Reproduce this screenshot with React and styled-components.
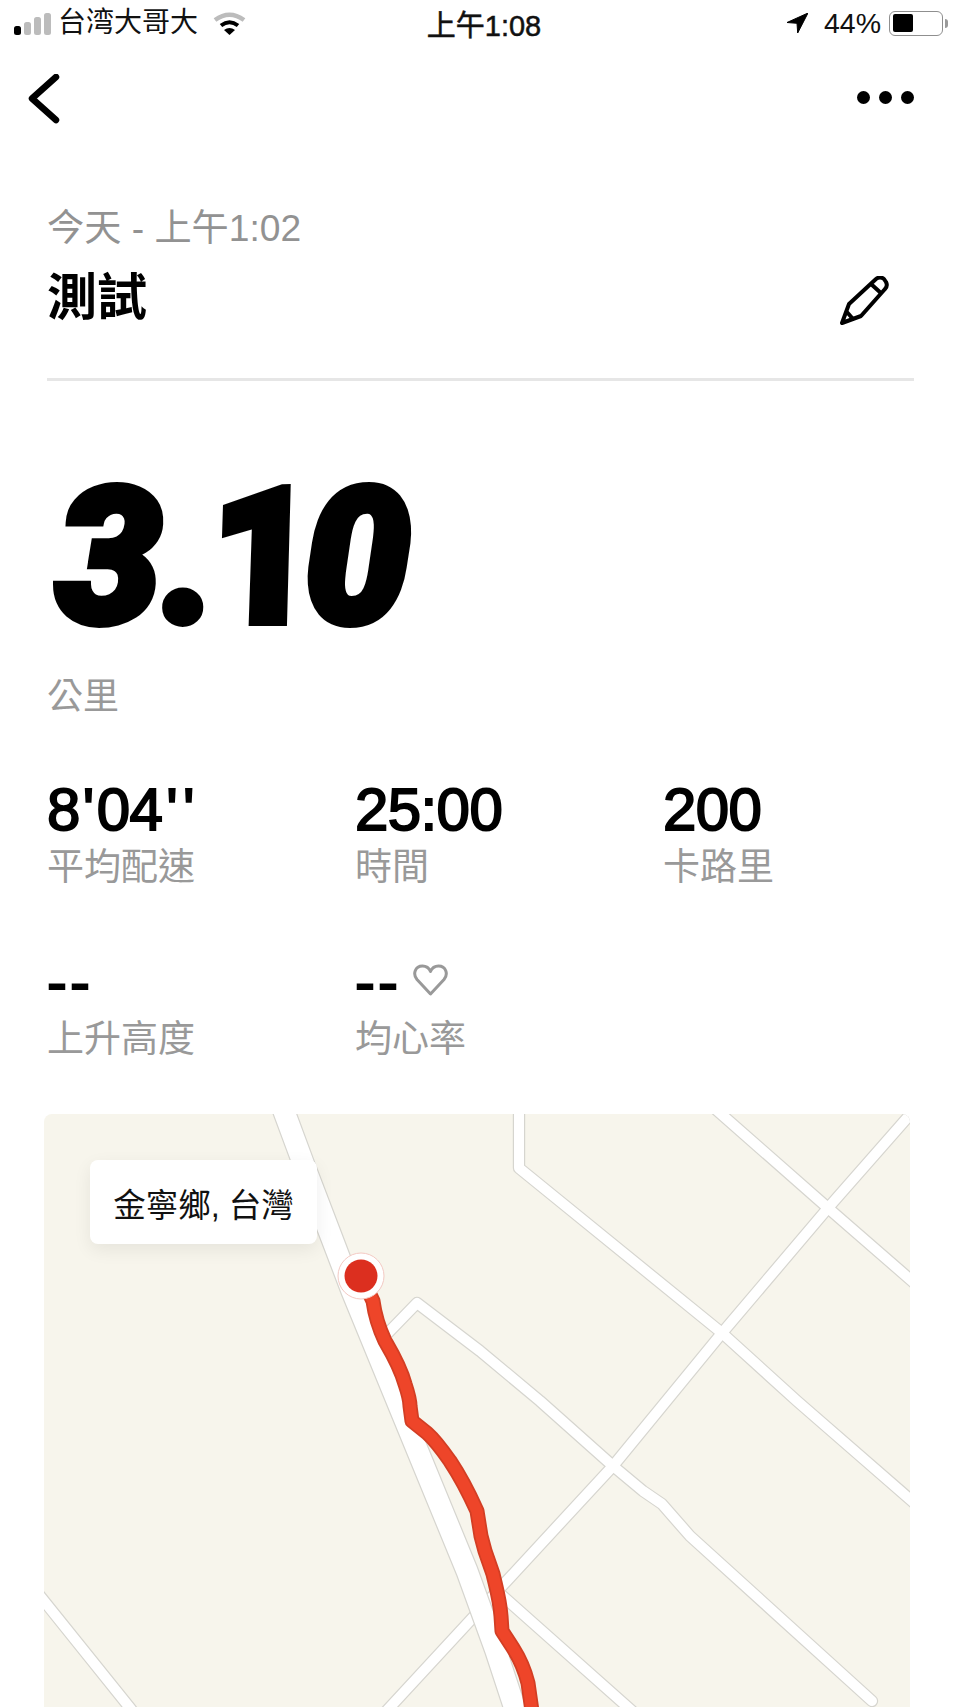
import React from "react";
import styled, { createGlobalStyle } from "styled-components";

const CJK = `"Liberation Sans", "Noto Sans CJK TC", sans-serif`;

const Global = createGlobalStyle`
  html, body { margin: 0; padding: 0; background: #fff; }
  * { box-sizing: border-box; }
`;

const Page = styled.div`
  width: 960px;
  height: 1707px;
  overflow: hidden;
  background: #fff;
  font-family: ${CJK};
  display: flex;
  flex-direction: column;
`;

const StatusBar = styled.div`
  height: 47px;
  display: grid;
  grid-template-columns: 1fr auto 1fr;
  align-items: center;
  padding: 0 12px 0 14px;
  font-size: 28px;
  color: #111;
`;
const StatusLeft = styled.div`
  display: flex;
  align-items: center;
`;
const Carrier = styled.span`
  margin-left: 7px;
  margin-right: 15px;
  line-height: 1;
`;
const Clock = styled.span`
  font-size: 29px;
  margin-left: 6px;
  -webkit-text-stroke: 0.5px #111;
`;
const StatusRight = styled.div`
  display: flex;
  align-items: center;
  justify-content: flex-end;
`;
const Percent = styled.span`
  margin: 0 8px 0 16px;
  font-size: 28.5px;
`;
const SignalBars = styled.div`
  display: flex;
  align-items: flex-end;
  gap: 3px;
  height: 22px;
  margin-top: 2px;
`;
const SignalBar = styled.i`
  display: block;
  width: 7px;
  height: ${(p) => p.$h}px;
  border-radius: 2.5px;
  background: ${(p) => (p.$on ? "#000" : "#bcbcbc")};
`;
const Battery = styled.div`
  width: 54px;
  height: 25px;
  border: 1.5px solid #8f8f8f;
  border-radius: 6px;
  padding: 2.5px;
  position: relative;
  margin-right: 5px;
  &::after {
    content: "";
    position: absolute;
    right: -5.5px;
    top: 7px;
    width: 3px;
    height: 9px;
    border-radius: 0 3px 3px 0;
    background: #9a9a9a;
  }
`;
const BatteryFill = styled.div`
  width: 20px;
  height: 100%;
  background: #000;
  border-radius: 2px;
`;

const NavBar = styled.div`
  height: 101px;
  display: flex;
  align-items: center;
  justify-content: space-between;
  padding: 0 46px 0 28px;
`;
const BackIcon = styled.svg`
  margin-top: 3px;
`;
const Dots = styled.div`
  display: flex;
  gap: 9px;
`;
const Dot = styled.i`
  display: block;
  width: 13px;
  height: 13px;
  border-radius: 50%;
  background: #000;
`;

const Header = styled.div`
  margin: 0 46px 0 47px;
  padding: 58px 0 0;
  height: 234px;
  border-bottom: 3px solid #e6e6e6;
`;
const DateText = styled.div`
  font-size: 37.2px;
  line-height: 44px;
  color: #929292;
`;
const TitleRow = styled.div`
  display: flex;
  justify-content: space-between;
  align-items: center;
  margin-top: 17px;
  padding-right: 25px;
`;
const Title = styled.div`
  font-size: 50px;
  line-height: 62px;
  font-weight: 700;
  color: #000;
`;
const PencilIcon = styled.svg`
  margin-top: 6px;
`;

const Distance = styled.div`
  display: flex;
  margin: 89px 0 0 56px;
  font-family: Roboto, "Liberation Sans", sans-serif;
  font-size: 188px;
  font-weight: 900;
  font-style: italic;
  line-height: 176px;
  letter-spacing: -6px;
  color: #000;
  -webkit-text-stroke: 8px #000;
`;
const Point = styled.span`
  margin: 0 -3px 0 7px;
`;
const One = styled.span`
  display: block;
  margin-right: -4px;
  transform: skewX(8deg);
`;
const Unit = styled.div`
  margin: 29px 0 0 47px;
  font-size: 36px;
  line-height: 44px;
  color: #999;
`;

const Stats = styled.div`
  display: grid;
  grid-template-columns: repeat(3, 308px);
  grid-template-rows: 172px 158px;
  margin: 61px 0 0 47px;
`;
const Stat = styled.div`
  display: flex;
  flex-direction: column;
`;
const Value = styled.div`
  font-size: 60px;
  line-height: 60px;
  font-weight: 400;
  letter-spacing: ${(p) => (p.$dashes ? "3px" : "-0.6px")};
  -webkit-text-stroke: 1.9px #000;
  color: #000;
  display: flex;
  align-items: flex-start;
`;
const Tick = styled.span`
  margin: 0 ${(p) => p.$gap}px;
`;
const Label = styled.div`
  font-size: 37px;
  line-height: 46px;
  margin-top: 5px;
  color: #999;
`;
const HeartWrap = styled.span`
  display: block;
  margin: 12px 0 0 12px;
  line-height: 0;
`;

const MapCard = styled.div`
  position: relative;
  margin: 4px 50px 0 44px;
  height: 594px;
  background: #f7f5ec;
  border-radius: 8px 8px 0 0;
  overflow: hidden;
`;
const MapSvg = styled.svg`
  display: block;
  width: 866px;
  height: 594px;
`;
const PlaceTag = styled.div`
  position: absolute;
  left: 46px;
  top: 46px;
  width: 227px;
  height: 84px;
  display: flex;
  align-items: center;
  justify-content: center;
  background: #fff;
  border-radius: 8px;
  font-size: 32.5px;
  color: #111;
  box-shadow: 0 6px 18px rgba(0, 0, 0, 0.07);
`;

const roads = [
  "M519 1105 V1167 L722 1332 L797 1400 L920 1507",
  "M712 1105 L828 1207 L920 1287",
  "M915 1108 L828 1207 L722 1332 L613 1465 L380 1717",
  "M385 1335 L417 1302 L480 1350 L540 1400 L613 1465 L643 1490 L662 1503 L690 1535 L872 1700",
  "M497 1590 L640 1717",
  "M36 1590 L130 1707 L138 1717",
];
const mainRoad = "M282 1105 L305 1167 L331 1235 L352 1290 L400 1407 L467 1570 L496 1650 L518 1717";
const route =
  "M361 1275 L373 1300 C375 1315 378 1325 385 1340 C392 1352 400 1365 405 1383 C408 1392 410 1400 410 1405 L412 1420 L427 1432 C436 1440 443 1450 450 1460 C458 1472 468 1490 477 1510 L481 1535 L485 1550 L493 1573 C497 1590 500 1600 501 1615 L502 1630 L513 1647 C520 1658 525 1670 528 1682 L533 1717";

function RoadEdge({ d, w }) {
  return <path d={d} fill="none" stroke="#d6d5cf" strokeWidth={w + 2.4} strokeLinecap="round" strokeLinejoin="round" />;
}
function RoadFill({ d, w }) {
  return <path d={d} fill="none" stroke="#fff" strokeWidth={w} strokeLinecap="round" strokeLinejoin="round" />;
}

export default function App() {
  return (
    <Page>
      <Global />
      <StatusBar>
        <StatusLeft>
          <SignalBars>
            <SignalBar $on $h={9} />
            <SignalBar $h={13} />
            <SignalBar $h={18} />
            <SignalBar $h={22} />
          </SignalBars>
          <Carrier>台湾大哥大</Carrier>
          <svg width="33" height="24" viewBox="0 0 33 24">
            <path d="M2 9 Q16.5 -1.5 31 9" fill="none" stroke="#bcbcbc" strokeWidth="4.5" />
            <path d="M8 14.5 Q16.5 8 25 14.5" fill="none" stroke="#000" strokeWidth="4" />
            <path d="M11 19 Q16.5 15 22 19 L16.5 24 Z" fill="#000" />
          </svg>
        </StatusLeft>
        <Clock>上午1:08</Clock>
        <StatusRight>
          <svg width="21" height="20" viewBox="0 0 21 20">
            <path d="M21 0 L0 9.5 L10 10.3 L10.7 20 Z" fill="#000" stroke="#000" strokeWidth="1" strokeLinejoin="round" />
          </svg>
          <Percent>44%</Percent>
          <Battery>
            <BatteryFill />
          </Battery>
        </StatusRight>
      </StatusBar>

      <NavBar>
        <BackIcon width="32" height="50" viewBox="0 0 32 50">
          <path d="M28 3 L4 24.5 L28 46" fill="none" stroke="#000" strokeWidth="6.5" strokeLinecap="round" strokeLinejoin="round" />
        </BackIcon>
        <Dots>
          <Dot />
          <Dot />
          <Dot />
        </Dots>
      </NavBar>

      <Header>
        <DateText>今天 - 上午1:02</DateText>
        <TitleRow>
          <Title>測試</Title>
          <PencilIcon width="49" height="49" viewBox="0 0 49 49">
            <path
              d="M2 47 L9 28 L36 3 Q40 0 44 3 L46 6 Q48 10 45 13 L21 40 Z M31 8 L42 18 M6 35 L13 43"
              fill="none"
              stroke="#000"
              strokeWidth="4"
              strokeLinejoin="round"
            />
          </PencilIcon>
        </TitleRow>
      </Header>

      <Distance>
        3<Point>.</Point>
        <One>1</One>0
      </Distance>
      <Unit>公里</Unit>

      <Stats>
        <Stat>
          <Value>
            8<Tick $gap={3}>'</Tick>04<Tick $gap={4}>'</Tick><Tick $gap={2}>'</Tick>
          </Value>
          <Label>平均配速</Label>
        </Stat>
        <Stat>
          <Value>25:00</Value>
          <Label>時間</Label>
        </Stat>
        <Stat>
          <Value>200</Value>
          <Label>卡路里</Label>
        </Stat>
        <Stat>
          <Value $dashes>--</Value>
          <Label>上升高度</Label>
        </Stat>
        <Stat>
          <Value $dashes>
            --
            <HeartWrap>
              <svg width="35" height="32" viewBox="0 0 35 32">
                <path
                  d="M17.5 30 L4 15.5 C-0.5 10 2 2 9.5 2 C13 2 16 4 17.5 7.5 C19 4 22 2 25.5 2 C33 2 35.5 10 31 15.5 Z"
                  fill="none"
                  stroke="#999"
                  strokeWidth="3"
                  strokeLinejoin="round"
                />
              </svg>
            </HeartWrap>
          </Value>
          <Label>均心率</Label>
        </Stat>
      </Stats>

      <MapCard>
        <MapSvg viewBox="44 1113 866 594">
          {roads.map((d) => (
            <RoadEdge key={d} d={d} w={10} />
          ))}
          {roads.map((d) => (
            <RoadFill key={d} d={d} w={10} />
          ))}
          <RoadEdge d={mainRoad} w={21} />
          <RoadFill d={mainRoad} w={21} />
          <path d={route} fill="none" stroke="#d23e24" strokeWidth="15" strokeLinejoin="round" />
          <path d={route} fill="none" stroke="#ee4529" strokeWidth="11.5" strokeLinejoin="round" />
          <circle cx="361" cy="1275" r="23" fill="#fff" stroke="#f3c9c3" strokeWidth="1" />
          <circle cx="361" cy="1275" r="16.5" fill="#dc2f1f" />
          <line x1="305" y1="1706.5" x2="678" y2="1706.5" stroke="#bdbdbd" strokeWidth="1" />
        </MapSvg>
        <PlaceTag>金寧鄉, 台灣</PlaceTag>
      </MapCard>
    </Page>
  );
}
